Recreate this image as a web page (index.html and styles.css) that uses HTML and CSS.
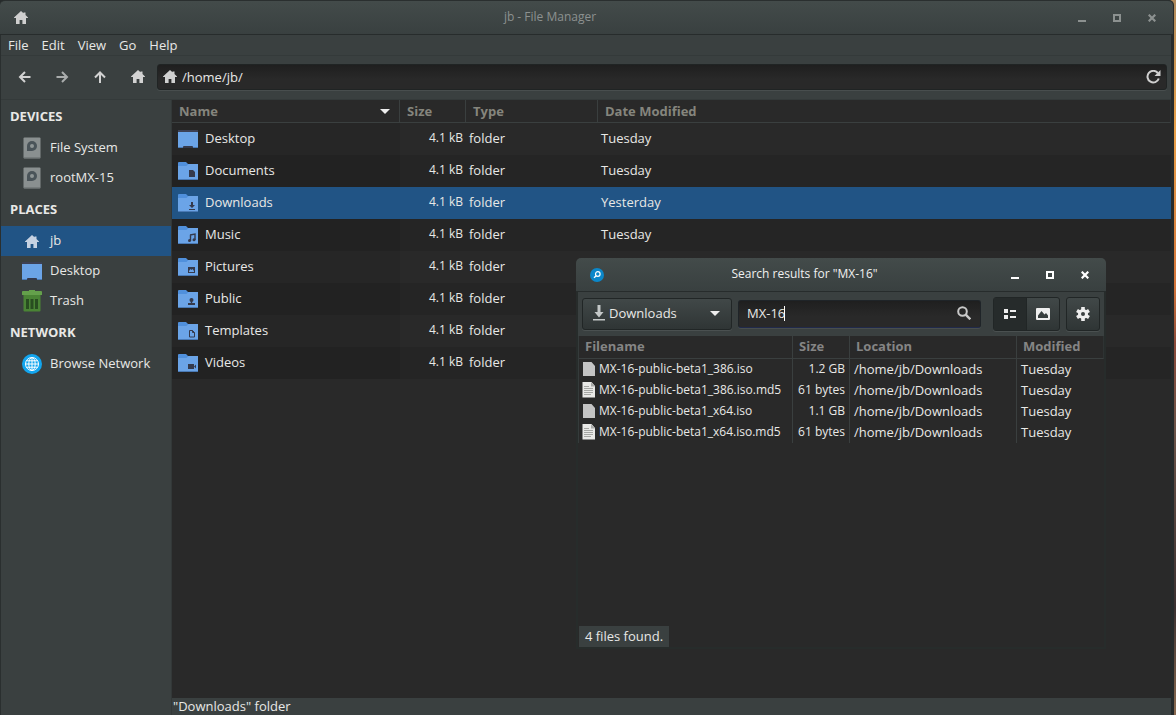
FILE: index.html
```
<!DOCTYPE html>
<html lang="en">
  <head>
    <meta charset="UTF-8" />
    <title>jb - File Manager</title>
    <link rel="stylesheet" href="styles.css">
  </head>
  <body>
    <!-- shared icons -->
    <svg class="defs" aria-hidden="true">
      <symbol id="home" viewBox="0 0 14 13">
        <path d="M7 0L0 6.6V7h2v6h3.6V9h2.8v4H12V7h2v-.4L11.5 4V1.5h-2v.8z" fill="currentColor" />
      </symbol>
      <symbol id="min" viewBox="0 0 8 8"><path d="M0 6h8v2H0z" fill="currentColor" /></symbol>
      <symbol id="max" viewBox="0 0 8 8"><path d="M1 1h6v6H1z" fill="none" stroke="currentColor" stroke-width="2" /></symbol>
      <symbol id="close" viewBox="0 0 8 8"><path d="M.7.7l6.600 6.600M7.300.7L.7 7.300" stroke="currentColor" stroke-width="2.200" /></symbol>
      <symbol id="folder" viewBox="0 0 20 18">
        <path d="M0 1q0-1 1-1h7l2 2h10v15.500H0z" fill="#5090dc" />
        <path d="M0 4h8.500l2-2H20v15H0z" fill="#6ba4e7" />
        <path d="M0 17h20v1H0z" fill="#4a7ab5" />
      </symbol>
      <symbol id="desktop" viewBox="0 0 20 18">
        <path d="M0 0h20v2H0z" fill="#3d4155" />
        <path d="M0 2h20v15H0z" fill="#6ba4e7" />
        <path d="M0 17h20v1H0z" fill="#4a7ab5" />
        <path d="M5 18v-1q0-1 1-1h8q1 0 1 1v1z" fill="#353a4c" />
      </symbol>
      <symbol id="drive" viewBox="0 0 18 22">
        <rect x="0.5" y="0.5" width="17" height="21" rx="1" fill="#8a9090" />
        <path d="M1 20.500h16v1H1z" fill="#626868" />
        <path d="M4 14V9a5 5 0 1 1 5 5z" fill="#4a5459" />
        <circle cx="9" cy="9" r="2" fill="#8f9696" />
      </symbol>
      <symbol id="iso" viewBox="0 0 14 16">
        <path d="M1 1h8.500l3.500 4v10H1z" fill="#c4c4c4" />
      </symbol>
      <symbol id="textfile" viewBox="0 0 14 16">
        <path d="M.5 0h9L13 4v11.500H.5z" fill="#e9e9e7" />
        <path d="M9 0v4.500h4z" fill="#a9aaa8" />
        <path d="M2 4.500h5M2 6.500h9M2 8.500h9M2 10.500h9M2 12.500h7" stroke="#a5a6a3" />
      </symbol>
    </svg>

    <main class="window">
      <header class="titlebar">
        <span class="title-icon"><svg width="14" height="13"><use href="#home" /></svg></span>
        <h1>jb - File Manager</h1>
        <div class="controls">
          <button aria-label="Minimize"><svg width="8" height="8"><use href="#min" /></svg></button>
          <button aria-label="Maximize"><svg width="8" height="8"><use href="#max" /></svg></button>
          <button aria-label="Close"><svg width="8" height="8"><use href="#close" /></svg></button>
        </div>
      </header>

      <div class="window-body">
        <nav class="menubar">
          <button>File</button>
          <button>Edit</button>
          <button>View</button>
          <button>Go</button>
          <button>Help</button>
        </nav>

        <div class="toolbar">
          <button class="tool" aria-label="Back"><svg width="13" height="12" viewBox="0 0 13 12"><path d="M12.500 6H2M7 1L2 6l5 5" /></svg></button>
          <button class="tool dim" aria-label="Forward"><svg width="13" height="12" viewBox="0 0 13 12"><path d="M.5 6H11M6 1l5 5-5 5" /></svg></button>
          <button class="tool" aria-label="Up"><svg width="12" height="12" viewBox="0 0 12 12"><path d="M6 12V2M1 6.500l5-5 5 5" /></svg></button>
          <button class="tool" aria-label="Home"><svg width="14" height="13"><use href="#home" /></svg></button>
          <div class="location">
            <svg width="14" height="13"><use href="#home" /></svg>
            <input type="text" value="/home/jb/" aria-label="Location" />
            <button aria-label="Reload">
              <svg width="15" height="14" viewBox="0 0 15 14"><path d="M11.800 3A5.800 5.800 0 1 0 12.800 8.500" fill="none" stroke="currentColor" stroke-width="2" /><path d="M14.500 0v6H8.500z" fill="currentColor" /></svg>
            </button>
          </div>
        </div>

        <div class="panes">
          <aside class="sidebar">
            <h2>DEVICES</h2>
            <a href="#"><svg width="18" height="22"><use href="#drive" /></svg>File System</a>
            <a href="#"><svg width="18" height="22"><use href="#drive" /></svg>rootMX-15</a>
            <h2>PLACES</h2>
            <a href="#" class="active"><svg width="14" height="13"><use href="#home" /></svg>jb</a>
            <a href="#"><svg width="20" height="18"><use href="#desktop" /></svg>Desktop</a>
            <a href="#">
              <svg width="20" height="22" viewBox="0 0 20 22">
                <path d="M1.500 4h17v16.500q0 1-1 1h-15q-1 0-1-1z" fill="#4a8435" />
                <path d="M0 2q0-1 1-1h6V0h6v1h6q1 0 1 1v3H0z" fill="#64a04b" />
                <path d="M4 9h3v10H4zM8.500 9h3v10h-3zM13 9h3v10h-3z" fill="#284d20" />
              </svg>Trash</a>
            <h2>NETWORK</h2>
            <a href="#">
              <svg width="20" height="20" viewBox="0 0 20 20">
                <circle cx="10" cy="10" r="10" fill="#12a5ee" />
                <g fill="none" stroke="#fff">
                  <circle cx="10" cy="10" r="6.500" />
                  <ellipse cx="10" cy="10" rx="3.200" ry="6.500" />
                  <path d="M10 3.500v13M3.500 10h13M4.500 6.800h11M4.500 13.200h11" />
                </g>
              </svg>Browse Network</a>
          </aside>

          <section class="files">
            <table class="file-table">
              <colgroup>
                <col class="c-name"><col class="c-size"><col class="c-type"><col>
              </colgroup>
              <thead>
                <tr>
                  <th><span class="sort">Name <svg width="10" height="5" viewBox="0 0 10 5"><path d="M0 0h10L5 5z" fill="#eee" /></svg></span></th>
                  <th>Size</th><th>Type</th><th>Date Modified</th>
                </tr>
              </thead>
              <tbody>
                <tr>
                  <td><span class="file"><svg width="20" height="18"><use href="#desktop" /></svg>Desktop</span></td>
                  <td>4.1 kB</td><td>folder</td><td>Tuesday</td>
                </tr>
                <tr>
                  <td><span class="file"><svg width="20" height="18" viewBox="0 0 20 18"><use href="#folder" /><path d="M11 8h4l2 2v5h-6z" fill="#353a4c" /></svg>Documents</span></td>
                  <td>4.1 kB</td><td>folder</td><td>Tuesday</td>
                </tr>
                <tr class="selected">
                  <td><span class="file"><svg width="20" height="18" viewBox="0 0 20 18"><use href="#folder" /><path d="M13 8h2v3h2l-3 3-3-3h2zM11 15h6v1h-6z" fill="#353a4c" /></svg>Downloads</span></td>
                  <td>4.1 kB</td><td>folder</td><td>Yesterday</td>
                </tr>
                <tr>
                  <td><span class="file"><svg width="20" height="18" viewBox="0 0 20 18"><use href="#folder" /><path d="M12 9l5-1v6M12.500 9v6" fill="none" stroke="#353a4c" stroke-width="1.400" /><circle cx="11.500" cy="14.500" r="1.500" fill="#353a4c" /><circle cx="16" cy="13.700" r="1.500" fill="#353a4c" /></svg>Music</span></td>
                  <td>4.1 kB</td><td>folder</td><td>Tuesday</td>
                </tr>
                <tr>
                  <td><span class="file"><svg width="20" height="18" viewBox="0 0 20 18"><use href="#folder" /><path d="M10 9h7v6h-7z" fill="#353a4c" /><path d="M11 14v-1l1.500-2 1 1 1-1 1.500 2v1z" fill="#6ba4e7" /></svg>Pictures</span></td>
                  <td>4.1 kB</td><td>folder</td><td>Tuesday</td>
                </tr>
                <tr>
                  <td><span class="file"><svg width="20" height="18" viewBox="0 0 20 18"><use href="#folder" /><circle cx="13.500" cy="10" r="2" fill="#353a4c" /><path d="M12.800 11h1.400v2h2.800v2h-7v-2h2.800z" fill="#353a4c" /></svg>Public</span></td>
                  <td>4.1 kB</td><td>folder</td><td>Tuesday</td>
                </tr>
                <tr>
                  <td><span class="file"><svg width="20" height="18" viewBox="0 0 20 18"><use href="#folder" /><path d="M11.500 8.500h3l2 2v4.500h-5zM14.500 8.500v2h2" fill="none" stroke="#353a4c" /></svg>Templates</span></td>
                  <td>4.1 kB</td><td>folder</td><td>Tuesday</td>
                </tr>
                <tr>
                  <td><span class="file"><svg width="20" height="18" viewBox="0 0 20 18"><use href="#folder" /><path d="M10 10h6v5h-6zM16 12.500l2-2v4z" fill="#353a4c" /></svg>Videos</span></td>
                  <td>4.1 kB</td><td>folder</td><td>Tuesday</td>
                </tr>
              </tbody>
            </table>
            <footer class="status">"Downloads" folder</footer>
          </section>
        </div>
      </div>
    </main>

    <section class="dialog">
      <header class="titlebar">
        <span class="title-icon">
          <svg width="14" height="14" viewBox="0 0 14 14"><circle cx="7" cy="7" r="7" fill="#0b87c9" /><circle cx="7.800" cy="6" r="2.300" fill="none" stroke="#fff" stroke-width="1.200" /><path d="M6.200 7.800L4 9.800" stroke="#fff" stroke-width="1.300" /></svg>
        </span>
        <h2>Search results for "MX-16"</h2>
        <div class="controls">
          <button aria-label="Minimize"><svg width="8" height="8"><use href="#min" /></svg></button>
          <button aria-label="Maximize"><svg width="8" height="8"><use href="#max" /></svg></button>
          <button aria-label="Close"><svg width="8" height="8"><use href="#close" /></svg></button>
        </div>
      </header>

      <div class="dialog-body">
        <div class="search-bar">
          <div class="combo">
            <svg width="12" height="16" viewBox="0 0 12 16"><path d="M4.500 0h3v7h3L6 12.500 1.500 7h3zM0 14h12v1.500H0z" fill="#c4c8c8" /></svg>
            <select aria-label="Folder">
              <option>Downloads</option>
            </select>
            <svg class="arrow" width="10" height="5" viewBox="0 0 10 5"><path d="M0 0h10L5 5z" fill="#eee" /></svg>
          </div>
          <div class="search">
            <input type="text" value="MX-16" aria-label="Search for files" />
            <span class="caret"></span>
            <svg width="14" height="14" viewBox="0 0 14 14"><circle cx="5.500" cy="5.500" r="4.300" fill="none" stroke="#c8c8c8" stroke-width="2" /><path d="M8.700 8.700l4.600 4.600" stroke="#c8c8c8" stroke-width="2.400" /></svg>
          </div>
          <div class="views">
            <button class="pressed" aria-label="List view"><svg width="12" height="10" viewBox="0 0 12 10"><path d="M0 0h4v4H0zM0 6h4v4H0zM6 1h6v2H6zM6 7h6v2H6z" fill="#eee" /></svg></button>
            <button aria-label="Thumbnail view"><svg width="14" height="12" viewBox="0 0 14 12"><path d="M1 0h12q1 0 1 1v10q0 1-1 1H1q-1 0-1-1V1q0-1 1-1zM2 10h10V7.500L10 5 8.500 6.500 5.500 3 2 7.500z" fill="#eee" fill-rule="evenodd" /></svg></button>
          </div>
          <button class="gear" aria-label="Settings">
            <svg width="14" height="14" viewBox="0 0 14 14"><g stroke="#eee" stroke-width="3.600"><path d="M7 0v14M1 3.500l12 7M13 3.500l-12 7" /></g><circle cx="7" cy="7" r="5" fill="#eee" /><circle cx="7" cy="7" r="2" fill="#3a4040" /></svg>
          </button>
        </div>

        <table class="result-table">
          <colgroup>
            <col class="r-name"><col class="r-size"><col class="r-location"><col>
          </colgroup>
          <thead>
            <tr><th>Filename</th><th>Size</th><th>Location</th><th>Modified</th></tr>
          </thead>
          <tbody>
            <tr>
              <td><span class="result"><svg width="14" height="16"><use href="#iso" /></svg>MX-16-public-beta1_386.iso</span></td>
              <td>1.2 GB</td><td>/home/jb/Downloads</td><td>Tuesday</td>
            </tr>
            <tr>
              <td><span class="result"><svg width="14" height="16"><use href="#textfile" /></svg>MX-16-public-beta1_386.iso.md5</span></td>
              <td>61 bytes</td><td>/home/jb/Downloads</td><td>Tuesday</td>
            </tr>
            <tr>
              <td><span class="result"><svg width="14" height="16"><use href="#iso" /></svg>MX-16-public-beta1_x64.iso</span></td>
              <td>1.1 GB</td><td>/home/jb/Downloads</td><td>Tuesday</td>
            </tr>
            <tr>
              <td><span class="result"><svg width="14" height="16"><use href="#textfile" /></svg>MX-16-public-beta1_x64.iso.md5</span></td>
              <td>61 bytes</td><td>/home/jb/Downloads</td><td>Tuesday</td>
            </tr>
          </tbody>
        </table>
        <p class="found">4 files found.</p>
      </div>
    </section>
  </body>
</html>
```
FILE: styles.css
```
* {
  box-sizing: border-box;
}

body {
  margin: 0;
  padding-right: 2px;
  background: linear-gradient(#b08a5c, #e8a14a 18%, #d2743a 40%, #8a4a3a 48%, #6b5348 60%, #3a3030 85%, #8a6a50);
  font-family: "Open Sans", "Noto Sans", sans-serif;
  font-size: 13px;
  line-height: 18px;
  color: #e8e8e6;
  overflow: hidden;
}

button,
input,
select {
  margin: 0;
  padding: 0;
  border: none;
  background: none;
  font: inherit;
  color: inherit;
  outline: none;
}

svg {
  display: block;
  flex: none;
}

.defs {
  position: absolute;
  width: 0;
  height: 0;
}

h1,
h2,
p {
  margin: 0;
}

.window {
  display: flex;
  flex-direction: column;
  height: 100vh;
  background-color: #262b2b;
  border-top-right-radius: 5px;
}

.titlebar {
  display: flex;
  align-items: center;
  flex: none;
  height: 34px;
  padding: 0 4px 0 14px;
  background: linear-gradient(#434b4a, #394040);
  border-bottom: 1px solid #272c2c;
  border-radius: 5px 5px 0 0;
}

.window .titlebar {
  height: 35px;
  margin-right: 1px;
  border-top: 1px solid #2a2f2f;
  color: #8c9190;
}

.titlebar h1,
.titlebar h2 {
  flex: 1;
  padding-bottom: 2px;
  font-size: 12px;
  font-weight: 400;
  text-align: center;
}

.title-icon {
  width: 22px;
  color: #cfcfcf;
}

.controls {
  display: flex;
}

.controls button {
  display: flex;
  align-items: center;
  justify-content: center;
  width: 35px;
  height: 32px;
}

.window-body {
  display: flex;
  flex-direction: column;
  flex: 1;
  min-height: 0;
  border-left: 1px solid #2a2f2f;
  border-right: 3px solid #262b2c;
  background-color: #3a4040;
}

.menubar {
  display: flex;
  gap: 13px;
  height: 21px;
  padding-left: 7px;
  border-bottom: 1px solid #343a3a;
}

.toolbar {
  display: flex;
  align-items: center;
  height: 44px;
  padding: 0 4px 2px;
  border-bottom: 1px solid #343a3a;
}

.tool {
  display: flex;
  align-items: center;
  justify-content: center;
  width: 38px;
  height: 30px;
  color: #d2d2d2;
}

.tool path {
  fill: none;
  stroke: currentColor;
  stroke-width: 2;
}

.dim {
  color: #a9acac;
}

.location {
  display: flex;
  align-items: center;
  flex: 1;
  gap: 5px;
  height: 26px;
  padding: 0 5px;
  background: linear-gradient(#1f1f1f, #292929 60%);
  border: 1px solid #202424;
  border-radius: 3px;
  box-shadow: 0 1px 0 #484e4e;
  color: #d0d0d0;
}

.location input {
  flex: 1;
  color: #e8e8e6;
}

.panes {
  display: flex;
  flex: 1;
  min-height: 0;
}

.sidebar {
  flex: none;
  width: 171px;
  border-right: 1px solid #333838;
}

.sidebar h2 {
  height: 33px;
  padding-left: 9px;
  font-size: 13px;
  line-height: 33px;
}

.sidebar a {
  display: grid;
  grid-template-columns: 38px 1fr;
  column-gap: 5px;
  align-items: center;
  height: 30px;
  padding: 0 0 2px 6px;
  color: #e8e8e6;
  text-decoration: none;
}

.sidebar a svg {
  justify-self: center;
  margin-top: 2px;
  margin-left: 12px;
}

.sidebar a.active {
  background-color: #215485;
}

.sidebar a.active svg {
  color: #c6d2e2;
}

.files {
  display: flex;
  flex-direction: column;
  justify-content: space-between;
  flex: 1;
  background-color: #292929;
}

table {
  width: 100%;
  table-layout: fixed;
  border-collapse: separate;
  border-spacing: 0;
}

th {
  height: 23px;
  padding: 0 7px;
  border-bottom: 1px solid #3a3f3f;
  border-right: 1px solid #3a3f3f;
  color: #85857d;
  text-align: left;
}

td {
  padding: 0 3px 2px;
  white-space: nowrap;
}

td:nth-child(2) {
  font-size: 12px;
  text-align: right;
}

.c-name {
  width: 228px;
}

.c-size {
  width: 66px;
}

.c-type {
  width: 132px;
}

.sort {
  display: flex;
  align-items: center;
  justify-content: space-between;
  padding-right: 2px;
}

.file-table td {
  height: 32px;
  background-color: #292929;
}

.file-table td:first-child {
  padding-left: 6px;
  background-color: #262626;
}

.file-table tr:nth-child(even) td {
  background-color: #252525;
}

.file-table tr:nth-child(even) td:first-child {
  background-color: #222222;
}

.file-table tr.selected td,
.file-table tr.selected td:first-child {
  background-color: #215485;
}

.file {
  display: flex;
  align-items: center;
  gap: 7px;
}

.file svg {
  margin-top: 2px;
}

.status {
  height: 17px;
  padding-left: 1px;
  background-color: #3a4040;
  line-height: 17px;
}

/* search window floating above the file manager */
.dialog {
  position: absolute;
  left: 576px;
  top: 258px;
  display: flex;
  flex-direction: column;
  width: 530px;
  height: 391px;
}

.dialog .titlebar {
  color: #f0f0f0;
}

.dialog .controls {
  color: #fff;
}

.dialog-body {
  display: flex;
  flex-direction: column;
  flex: 1;
  border: 2px solid #272c2b;
  border-top: none;
  background-color: #292929;
}

.search-bar {
  display: flex;
  align-items: center;
  height: 44px;
  padding: 0 4px;
  background-color: #3a4040;
}

.combo,
.views,
.gear {
  background: linear-gradient(#414848, #2f3535);
  border: 1px solid #212626;
  border-radius: 3px;
  box-shadow: 0 1px 0 #4a5050;
}

.combo {
  display: grid;
  grid-template-columns: 16px 1fr 10px;
  align-items: center;
  width: 150px;
  height: 32px;
  margin-right: 6px;
  padding: 0 11px 2px 10px;
}

.combo select {
  appearance: none;
}

.search {
  position: relative;
  display: flex;
  align-items: center;
  flex: 1;
  height: 28px;
  margin-right: 12px;
  padding: 0 9px 2px 8px;
  background: linear-gradient(#1f1f1f, #292929 60%);
  border: 1px solid #1f2428;
  border-bottom-color: #20294a;
  border-radius: 3px;
  box-shadow: 0 1px 0 #484e4e;
}

.search input {
  flex: 1;
  min-width: 0;
}

.caret {
  position: absolute;
  left: 45px;
  width: 1px;
  height: 15px;
  background-color: #fff;
}

.views {
  display: flex;
  margin-right: 6px;
}

.views button {
  display: flex;
  align-items: center;
  justify-content: center;
  width: 32px;
  height: 32px;
}

.views .pressed {
  width: 33px;
  background-color: #262b2b;
  border-right: 1px solid #212626;
}

.gear {
  display: flex;
  align-items: center;
  justify-content: center;
  width: 34px;
  height: 34px;
}

.result-table {
  border-left: 1px solid #353b3b;
}

.result-table th {
  padding: 0 6px 2px;
  color: #858585;
}

.result-table th:last-child,
.file-table th:last-child {
  border-right-color: #2e3333;
}

.result-table td {
  height: 21px;
  padding: 0 4px 1px;
  border-right: 1px solid #3a3f3f;
}

.result-table td:first-child {
  padding: 0 0 1px 3px;
  font-size: 12px;
}

.result-table td:last-child {
  border-right: none;
}

.result {
  display: flex;
  align-items: center;
  gap: 3px;
}

.r-name {
  width: 214px;
}

.r-size {
  width: 57px;
}

.r-location {
  width: 167px;
}

.found {
  align-self: flex-start;
  margin-top: auto;
  margin-left: 1px;
  padding: 1px 6px 2px;
  background-color: #3a4040;
}
```
